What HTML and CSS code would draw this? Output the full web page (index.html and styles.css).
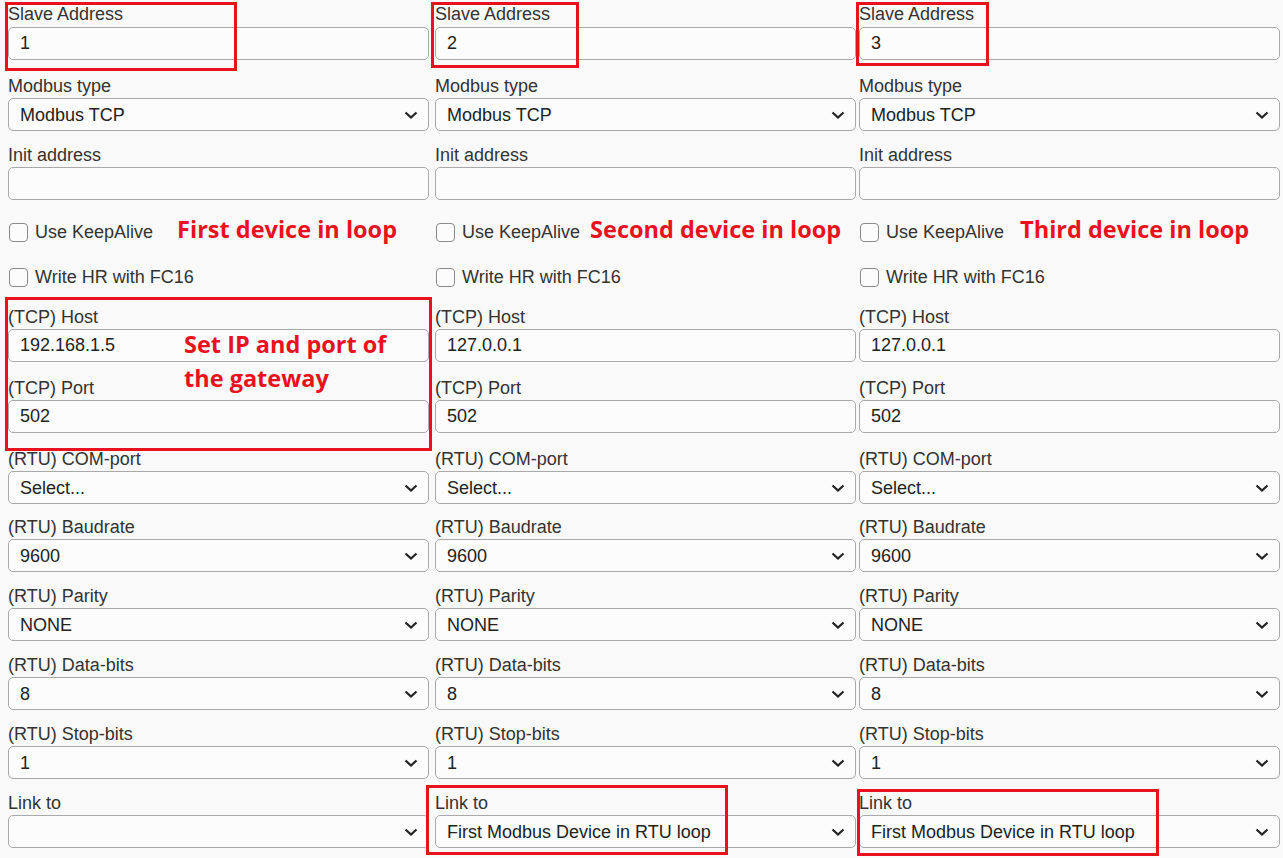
FILE: index.html
```html
<!DOCTYPE html>
<html lang="en">
<head>
    <meta charset="UTF-8">
    <meta name="viewport" content="width=device-width, initial-scale=1.0">
    <title>Modbus devices</title>
    <link rel="stylesheet" href="styles.css">
</head>
<body>
    <div class="page">
        <div class="devices">

            <!-- device 1 -->
            <div class="device">
                <div class="field slave"><label>Slave Address</label><input type="text" value="1"></div>
                <div class="field"><label>Modbus type</label>
                    <div class="select-wrap"><select><option>Modbus TCP</option></select>
                        <svg class="chevron" viewBox="0 0 14 8"><path d="M1.5 1.5 L7 6.5 L12.5 1.5"/></svg></div>
                </div>
                <div class="field"><label>Init address</label><input type="text" value=""></div>
                <div class="check-row"><span class="box"></span><span>Use KeepAlive</span><span class="note note-1">First device in loop</span></div>
                <div class="check-row last"><span class="box"></span><span>Write HR with FC16</span></div>
                <div class="field tcp"><label>(TCP) Host</label><input type="text" value="192.168.1.5"></div>
                <div class="field tcp"><label>(TCP) Port</label><input type="text" value="502"></div>
                <div class="field com"><label>(RTU) COM-port</label>
                    <div class="select-wrap"><select><option>Select...</option></select>
                        <svg class="chevron" viewBox="0 0 14 8"><path d="M1.5 1.5 L7 6.5 L12.5 1.5"/></svg></div>
                </div>
                <div class="field"><label>(RTU) Baudrate</label>
                    <div class="select-wrap"><select><option>9600</option></select>
                        <svg class="chevron" viewBox="0 0 14 8"><path d="M1.5 1.5 L7 6.5 L12.5 1.5"/></svg></div>
                </div>
                <div class="field"><label>(RTU) Parity</label>
                    <div class="select-wrap"><select><option>NONE</option></select>
                        <svg class="chevron" viewBox="0 0 14 8"><path d="M1.5 1.5 L7 6.5 L12.5 1.5"/></svg></div>
                </div>
                <div class="field"><label>(RTU) Data-bits</label>
                    <div class="select-wrap"><select><option>8</option></select>
                        <svg class="chevron" viewBox="0 0 14 8"><path d="M1.5 1.5 L7 6.5 L12.5 1.5"/></svg></div>
                </div>
                <div class="field"><label>(RTU) Stop-bits</label>
                    <div class="select-wrap"><select><option>1</option></select>
                        <svg class="chevron" viewBox="0 0 14 8"><path d="M1.5 1.5 L7 6.5 L12.5 1.5"/></svg></div>
                </div>
                <div class="field"><label>Link to</label>
                    <div class="select-wrap"><select><option></option></select>
                        <svg class="chevron" viewBox="0 0 14 8"><path d="M1.5 1.5 L7 6.5 L12.5 1.5"/></svg></div>
                </div>
            </div>

            <!-- device 2 -->
            <div class="device">
                <div class="field slave"><label>Slave Address</label><input type="text" value="2"></div>
                <div class="field"><label>Modbus type</label>
                    <div class="select-wrap"><select><option>Modbus TCP</option></select>
                        <svg class="chevron" viewBox="0 0 14 8"><path d="M1.5 1.5 L7 6.5 L12.5 1.5"/></svg></div>
                </div>
                <div class="field"><label>Init address</label><input type="text" value=""></div>
                <div class="check-row"><span class="box"></span><span>Use KeepAlive</span><span class="note note-2">Second device in loop</span></div>
                <div class="check-row last"><span class="box"></span><span>Write HR with FC16</span></div>
                <div class="field tcp"><label>(TCP) Host</label><input type="text" value="127.0.0.1"></div>
                <div class="field tcp"><label>(TCP) Port</label><input type="text" value="502"></div>
                <div class="field com"><label>(RTU) COM-port</label>
                    <div class="select-wrap"><select><option>Select...</option></select>
                        <svg class="chevron" viewBox="0 0 14 8"><path d="M1.5 1.5 L7 6.5 L12.5 1.5"/></svg></div>
                </div>
                <div class="field"><label>(RTU) Baudrate</label>
                    <div class="select-wrap"><select><option>9600</option></select>
                        <svg class="chevron" viewBox="0 0 14 8"><path d="M1.5 1.5 L7 6.5 L12.5 1.5"/></svg></div>
                </div>
                <div class="field"><label>(RTU) Parity</label>
                    <div class="select-wrap"><select><option>NONE</option></select>
                        <svg class="chevron" viewBox="0 0 14 8"><path d="M1.5 1.5 L7 6.5 L12.5 1.5"/></svg></div>
                </div>
                <div class="field"><label>(RTU) Data-bits</label>
                    <div class="select-wrap"><select><option>8</option></select>
                        <svg class="chevron" viewBox="0 0 14 8"><path d="M1.5 1.5 L7 6.5 L12.5 1.5"/></svg></div>
                </div>
                <div class="field"><label>(RTU) Stop-bits</label>
                    <div class="select-wrap"><select><option>1</option></select>
                        <svg class="chevron" viewBox="0 0 14 8"><path d="M1.5 1.5 L7 6.5 L12.5 1.5"/></svg></div>
                </div>
                <div class="field"><label>Link to</label>
                    <div class="select-wrap"><select><option>First Modbus Device in RTU loop</option></select>
                        <svg class="chevron" viewBox="0 0 14 8"><path d="M1.5 1.5 L7 6.5 L12.5 1.5"/></svg></div>
                </div>
            </div>

            <!-- device 3 -->
            <div class="device">
                <div class="field slave"><label>Slave Address</label><input type="text" value="3"></div>
                <div class="field"><label>Modbus type</label>
                    <div class="select-wrap"><select><option>Modbus TCP</option></select>
                        <svg class="chevron" viewBox="0 0 14 8"><path d="M1.5 1.5 L7 6.5 L12.5 1.5"/></svg></div>
                </div>
                <div class="field"><label>Init address</label><input type="text" value=""></div>
                <div class="check-row"><span class="box"></span><span>Use KeepAlive</span><span class="note note-3">Third device in loop</span></div>
                <div class="check-row last"><span class="box"></span><span>Write HR with FC16</span></div>
                <div class="field tcp"><label>(TCP) Host</label><input type="text" value="127.0.0.1"></div>
                <div class="field tcp"><label>(TCP) Port</label><input type="text" value="502"></div>
                <div class="field com"><label>(RTU) COM-port</label>
                    <div class="select-wrap"><select><option>Select...</option></select>
                        <svg class="chevron" viewBox="0 0 14 8"><path d="M1.5 1.5 L7 6.5 L12.5 1.5"/></svg></div>
                </div>
                <div class="field"><label>(RTU) Baudrate</label>
                    <div class="select-wrap"><select><option>9600</option></select>
                        <svg class="chevron" viewBox="0 0 14 8"><path d="M1.5 1.5 L7 6.5 L12.5 1.5"/></svg></div>
                </div>
                <div class="field"><label>(RTU) Parity</label>
                    <div class="select-wrap"><select><option>NONE</option></select>
                        <svg class="chevron" viewBox="0 0 14 8"><path d="M1.5 1.5 L7 6.5 L12.5 1.5"/></svg></div>
                </div>
                <div class="field"><label>(RTU) Data-bits</label>
                    <div class="select-wrap"><select><option>8</option></select>
                        <svg class="chevron" viewBox="0 0 14 8"><path d="M1.5 1.5 L7 6.5 L12.5 1.5"/></svg></div>
                </div>
                <div class="field"><label>(RTU) Stop-bits</label>
                    <div class="select-wrap"><select><option>1</option></select>
                        <svg class="chevron" viewBox="0 0 14 8"><path d="M1.5 1.5 L7 6.5 L12.5 1.5"/></svg></div>
                </div>
                <div class="field"><label>Link to</label>
                    <div class="select-wrap"><select><option>First Modbus Device in RTU loop</option></select>
                        <svg class="chevron" viewBox="0 0 14 8"><path d="M1.5 1.5 L7 6.5 L12.5 1.5"/></svg></div>
                </div>
            </div>
        </div>

        <!-- red markers drawn on top of the form -->
        <div class="mark mark-slave-1"></div>
        <div class="mark mark-slave-2"></div>
        <div class="mark mark-slave-3"></div>
        <div class="mark mark-tcp"></div>
        <div class="mark mark-link-2"></div>
        <div class="mark mark-link-3"></div>
        <div class="note note-tcp">Set IP and port of<br>the gateway</div>
    </div>
</body>
</html>
```

FILE: styles.css
```css
body {
    margin: 0;
    background-color: #f9f9f9;
    font-family: "Liberation Sans", Arial, sans-serif;
    font-size: 18px;
    color: #333;
}

.page {
    position: relative;
    padding: 3px 0 0 8px;
    height: 855px;
    overflow: hidden;
}

.devices {
    display: grid;
    grid-template-columns: 427px 424px 421px;
}

.device {
    display: flex;
    flex-direction: column;
    width: 421px;
}

.field {
    display: flex;
    flex-direction: column;
    margin-bottom: 12px;
}

.field.slave,
.field.tcp {
    margin-bottom: 14px;
}

.field.com {
    margin-bottom: 11px;
}

.field label {
    line-height: 20px;
    height: 22px;
    padding-top: 2px;
}

.field.slave label {
    padding-top: 1px;
    height: 23px;
}

.field input,
.field select {
    box-sizing: border-box;
    width: 421px;
    height: 33px;
    margin: 0;
    padding: 0 11px;
    border: 1px solid #a9a9a9;
    border-radius: 5px;
    background-color: #fcfcfc;
    font-family: inherit;
    font-size: 18px;
    color: #222;
    outline: none;
}

.field select {
    appearance: none;
    -webkit-appearance: none;
}

.select-wrap {
    position: relative;
}

.chevron {
    position: absolute;
    right: 11px;
    top: 13px;
    width: 14px;
    height: 8px;
    fill: none;
    stroke: #222;
    stroke-width: 2.2;
    pointer-events: none;
}

.check-row {
    display: flex;
    align-items: center;
    height: 30px;
    margin-top: 5px;
    margin-bottom: 15px;
}

.check-row.last {
    margin-top: 0;
    margin-bottom: 13px;
}

.box {
    box-sizing: border-box;
    width: 19px;
    height: 19px;
    margin: 0 7px 0 1px;
    border: 1px solid #8a8a8a;
    border-radius: 4px;
    background-color: #fcfcfc;
}

.note {
    font-family: "Open Sans", sans-serif;
    font-weight: 700;
    font-size: 23.5px;
    color: #e8121e;
    white-space: nowrap;
}

.check-row .note {
    margin-top: -6px;
}

.note-1 { margin-left: 24px; }
.note-2 { margin-left: 10px; }
.note-3 { margin-left: 16px; }

.note-tcp {
    position: absolute;
    left: 184px;
    top: 327px;
    line-height: 34px;
}

.mark {
    position: absolute;
    border: 3px solid #e8121e;
}

.mark-slave-1 { left: 5px;   top: 2px;   width: 226px; height: 63px; }
.mark-slave-2 { left: 431px; top: 2px;   width: 142px; height: 60px; }
.mark-slave-3 { left: 856px; top: 2px;   width: 127px; height: 58px; }
.mark-tcp     { left: 5px;   top: 297px; width: 421px; height: 148px; }
.mark-link-2  { left: 426px; top: 785px; width: 296px; height: 64px; }
.mark-link-3  { left: 857px; top: 789px; width: 296px; height: 61px; }
```
